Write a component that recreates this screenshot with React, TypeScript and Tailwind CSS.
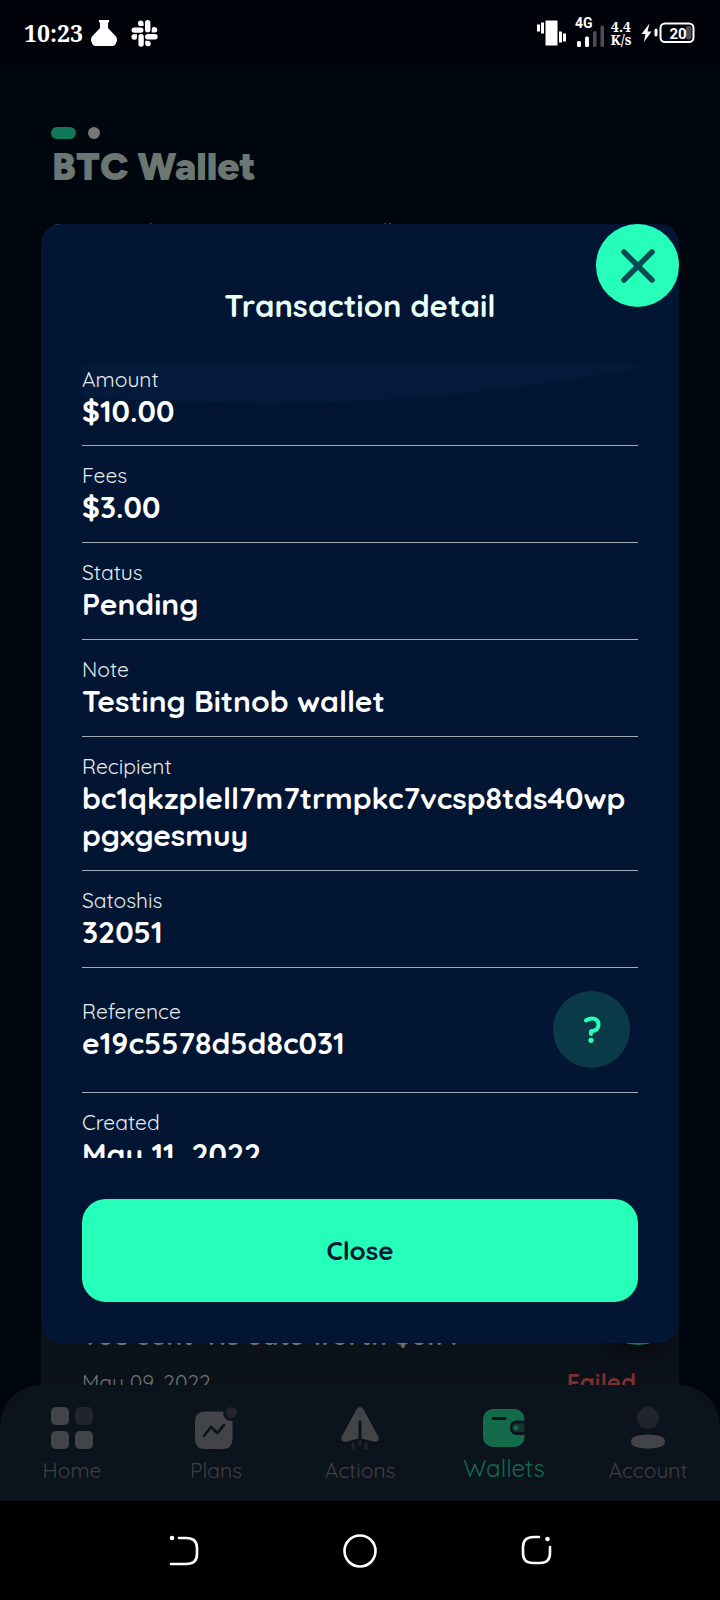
import type { ReactNode } from "react";

type Detail = { label: string; value: string; help?: boolean };

const details: Detail[] = [
  { label: "Amount", value: "$10.00" },
  { label: "Fees", value: "$3.00" },
  { label: "Status", value: "Pending" },
  { label: "Note", value: "Testing Bitnob wallet" },
  { label: "Recipient", value: "bc1qkzplell7m7trmpkc7vcsp8tds40wppgxgesmuy" },
  { label: "Satoshis", value: "32051" },
  { label: "Reference", value: "e19c5578d5d8c031", help: true },
  { label: "Created", value: "May 11, 2022" },
];

function StatusBar() {
  return (
    <header className="flex h-[66px] items-center justify-between bg-[#00020a] pl-6 pr-[25px] text-white">
      <div className="flex items-center">
        <span className="w-[67px] font-['Noto_Serif','Liberation_Serif',serif] text-[23px] font-bold leading-8">10:23</span>
        <svg className="h-[26px] w-[26px]" viewBox="0 0 26 26" fill="currentColor" aria-hidden="true">
          <path d="M8 0h10v2.500h-1V8l8 8.500c1.300 2 1.300 4.500 0 6.500q-1 3-3.500 3h-17Q2 26 1 23c-1.300-2-1.300-4.500 0-6.500L9 8V2.500H8Z" />
        </svg>
        <svg className="ml-[14px] h-[27px] w-[27px]" viewBox="0 0 27 27" fill="currentColor" aria-hidden="true">
          <rect x="14" y="0" width="5.400" height="12.400" rx="2.700" />
          <rect x="0.500" y="7.400" width="12" height="5.400" rx="2.700" />
          <rect x="7.400" y="14" width="5.400" height="12.700" rx="2.700" />
          <rect x="14" y="14" width="12.700" height="5.400" rx="2.700" />
          <path d="M12.600 6H10a2.800 2.800 0 1 1 2.600-3ZM20.700 12.600V10a2.800 2.800 0 1 1 3 2.600ZM14.200 20.700h2.500a2.800 2.800 0 1 1-2.500 3ZM6 14.200v2.500a2.800 2.800 0 1 1-3-2.500Z" />
        </svg>
      </div>
      <div className="flex items-center">
        <svg className="h-[26px] w-[29px]" viewBox="0 0 29 26" fill="currentColor" aria-hidden="true">
          <path d="M0 4.500h3v7H0zM4 2.500h3v11H4zM8.500 0.500h12v25h-12zM22 11.500h3v11h-3zM26 13.500h3v8h-3z" />
        </svg>
        <div className="ml-[9px] flex flex-col">
          <span className="h-[10px] font-['Roboto',sans-serif] text-[14px] font-bold leading-[6px]">4G</span>
          <svg className="-mt-[5px] h-[22px] w-[30px]" viewBox="0 0 30 22" fill="currentColor" aria-hidden="true">
            <rect x="2" y="16" width="4" height="6" rx="1.500" />
            <rect x="10" y="11.500" width="4" height="10.500" rx="1.500" />
            <rect x="18" y="6" width="3.500" height="16" rx="1.500" opacity=".3" />
            <rect x="25.500" y="0.500" width="3.500" height="21.500" rx="1.500" opacity=".3" />
          </svg>
        </div>
        <span className="ml-1 w-[24px] text-center font-['Noto_Serif','Liberation_Serif',serif] text-[14px] font-bold leading-[13px]">4.4 K/s</span>
        <svg className="ml-2 h-[22px] w-[54px]" viewBox="0 0 54 22" fill="currentColor" aria-hidden="true">
          <path d="M8.500 1.500 0.500 12h4L3 20l7.500-10.500h-4Z" />
          <rect x="13.500" y="6.500" width="3" height="8" rx="1.500" />
          <rect x="19.500" y="1.500" width="33" height="18.500" rx="4.500" fill="none" stroke="currentColor" strokeWidth="2" />
          <rect x="45" y="4" width="5.500" height="13.500" rx="2" opacity=".3" />
          <text x="28.500" y="16.500" className="font-['Roboto',sans-serif] text-[15px] font-bold">20</text>
        </svg>
      </div>
    </header>
  );
}

function HomeIcon() {
  return (
    <svg className="h-[42px] w-[42px]" viewBox="0 0 42 42" fill="#424449" aria-hidden="true">
      <rect width="18" height="18" rx="5" />
      <rect x="24" width="18" height="18" rx="5" fill="#21252b" />
      <rect y="24" width="18" height="18" rx="5" />
      <rect x="24" y="24" width="18" height="18" rx="5" />
    </svg>
  );
}

function PlansIcon() {
  return (
    <svg className="h-[42px] w-[42px]" viewBox="0 0 42 42" aria-hidden="true">
      <path d="M10 4.500h18.500a8 8 0 0 0 9 9.500v18q0 10-10 10H10Q0 42 0 32V14.500Q0 4.500 10 4.500Z" fill="#424449" />
      <circle cx="36.500" cy="5.500" r="5.500" fill="#21252b" />
      <path d="m9 29 7-9 6.500 6 6.500-8" fill="none" stroke="#0b131d" strokeWidth="2.600" strokeLinecap="round" strokeLinejoin="round" />
    </svg>
  );
}

function ActionsIcon() {
  return (
    <svg className="h-[42px] w-[42px]" viewBox="0 0 42 42" aria-hidden="true">
      <path d="M18 1.500Q21-1.500 24 1.500L39.500 30q1 5-4 4.800L22.500 31.500V14.500q-1.500-3-3 0v17L6.500 34.800q-5 .2-4-4.800Z" fill="#424449" />
      <path d="M14 37.500v3.500M21 34v3M27 37.500v4" stroke="#21252b" strokeWidth="3" strokeLinecap="round" />
    </svg>
  );
}

function WalletIcon() {
  return (
    <svg className="h-[42px] w-[42px]" viewBox="0 0 42 42" aria-hidden="true">
      <rect y="2" width="41.500" height="38" rx="10" fill="#136b4c" />
      <path d="M42 13.500h-9.500a7.500 7.500 0 0 0 0 14.500H42Z" fill="#0b131d" />
      <path d="M41.500 16.500H33a4 4 0 0 0 0 8.500h8.500Z" fill="#10372f" />
      <circle cx="33" cy="20.700" r="2.300" fill="#136b4c" />
      <path d="M10 11.500h12" stroke="#0b131d" strokeWidth="3" strokeLinecap="round" />
    </svg>
  );
}

function AccountIcon() {
  return (
    <svg className="h-[42px] w-[42px]" viewBox="0 0 42 42" aria-hidden="true">
      <circle cx="21" cy="11" r="11" fill="#21252b" />
      <path d="M4 34.500q0-7 17-7t17 7-17 7-17-7Z" fill="#424449" />
    </svg>
  );
}

function Tab({ label, icon, active = false }: { label: string; icon: ReactNode; active?: boolean }) {
  return (
    <a
      href={"#" + label.toLowerCase()}
      aria-current={active ? "page" : undefined}
      className={
        active
          ? "flex flex-1 flex-col items-center gap-1 text-[24px] leading-[30px] text-[#136b4c]"
          : "flex flex-1 flex-col items-center gap-[7px] text-[21px] leading-[28px] text-[#3f4042]"
      }
    >
      {icon}
      <span>{label}</span>
    </a>
  );
}

function TransactionDialog() {
  return (
    <section
      role="dialog"
      aria-labelledby="dialog-title"
      className="absolute inset-x-[41px] top-[224px] rounded-[20px] bg-[#021533] px-[41px] pb-[41px] pt-[63px]"
    >
      <button type="button" aria-label="Dismiss" className="absolute right-0 top-0 flex h-[83px] w-[83px] items-center justify-center rounded-full bg-[#26ffb9]">
        <svg className="h-[34px] w-[34px]" viewBox="0 0 34 34" fill="none" stroke="#0b4a55" strokeWidth="5.500" strokeLinecap="round" aria-hidden="true">
          <path d="m3 3 28 28M31 3 3 31" />
        </svg>
      </button>
      <h2 id="dialog-title" className="text-center text-[31px] font-bold leading-[37px] text-[#e9fff8]">Transaction detail</h2>
      <div className="relative mt-[41px] max-h-[793px] overflow-y-auto [scrollbar-width:none]">
        <svg className="absolute left-0 top-0 h-[38px] w-full" viewBox="0 0 556 38" preserveAspectRatio="none" fill="#031a3a" aria-hidden="true">
          <path d="M0 0h556v3Q340 44 130 37 50 36 0 32Z" />
        </svg>
        <dl className="relative">
          {details.map((item) => (
            <div key={item.label} className="flex items-center justify-between border-b border-[#a3aab5] pb-4 pt-[15px] first:pb-[15px] first:pt-0">
              <div className="min-w-0">
                <dt className="text-[21px] leading-7 text-[#e6eced]">{item.label}</dt>
                <dd className="break-all text-[30px] font-bold leading-[37px] text-white">{item.value}</dd>
              </div>
              {item.help && (
                <button type="button" aria-label="About this reference" className="my-2 mr-2 flex h-[77px] w-[77px] shrink-0 items-center justify-center rounded-full bg-[#0a3948] text-[#26ffb9]">
                  <svg className="h-[27px] w-[18px]" viewBox="0 0 18 27" fill="none" stroke="currentColor" strokeWidth="4" strokeLinecap="round" strokeLinejoin="round" aria-hidden="true">
                    <path d="M3 4.500C9 .5 15.500 3 15.500 8.500c0 4.500-3 6.500-7.500 6.800V18" />
                    <circle cx="8" cy="24.300" r="2.600" fill="currentColor" stroke="none" />
                  </svg>
                </button>
              )}
            </div>
          ))}
        </dl>
      </div>
      <button type="button" className="mt-[41px] h-[103px] w-full rounded-[24px] bg-[#26ffb9] text-[26px] font-bold text-[#021533]">Close</button>
    </section>
  );
}

export default function App() {
  return (
    <div className="relative flex min-h-screen flex-col bg-[#00060e] font-['Quicksand','Lato',sans-serif]">
      <StatusBar />
      <main className="flex flex-1 flex-col">
        <div className="flex items-center gap-3 px-[51px] pt-[61px]">
          <span className="h-[12px] w-[25px] rounded-full bg-[#137857]" />
          <span className="h-[12px] w-[12px] rounded-full bg-[#797676]" />
        </div>
        <h1 className="mt-1 px-[52px] font-['Figtree','Inter',sans-serif] text-[39px] font-black leading-[48px] text-[#6c7672]">BTC Wallet</h1>
        <p className="mt-[27px] px-[52px] text-[22px] leading-7 text-[#6c7672]">Swap and manage your USD wallet</p>
        <div className="mx-[41px] mt-10 flex h-0 flex-1 flex-col justify-end overflow-hidden bg-[#0c121a] px-[41px] text-[#6c7672]">
          <div className="flex items-end justify-between">
            <p className="-mb-2 text-[27px] font-bold leading-9">You sent 413 sats worth $0.14</p>
            <span className="-mr-[41px] h-[82px] w-[82px] rounded-full bg-[#137857] shadow-[0_8px_24px_#00000080]" />
          </div>
          <div className="-mb-[15px] mt-[19px] flex justify-between pr-[2px] leading-9">
            <span className="text-[21px]">May 09, 2022</span>
            <span className="text-[24px] font-bold text-[#7b2f2e]">Failed</span>
          </div>
        </div>
      </main>
      <nav aria-label="Main" className="relative flex h-[116px] rounded-t-[41px] bg-[#0b131d] pt-[22px]">
        <Tab label="Home" icon={<HomeIcon />} />
        <Tab label="Plans" icon={<PlansIcon />} />
        <Tab label="Actions" icon={<ActionsIcon />} />
        <Tab label="Wallets" icon={<WalletIcon />} active />
        <Tab label="Account" icon={<AccountIcon />} />
      </nav>
      <div className="flex h-[99px] items-center justify-center gap-[143px] bg-black text-white">
        <button type="button" aria-label="Back">
          <svg className="h-[34px] w-[34px]" viewBox="0 0 34 34" fill="none" stroke="currentColor" strokeWidth="2.600" strokeLinecap="round" aria-hidden="true">
            <path d="M13 4h7q11 0 11 10v6q0 10-11 10H5" />
            <circle cx="6" cy="4" r="1" fill="currentColor" />
          </svg>
        </button>
        <button type="button" aria-label="Home screen">
          <svg className="h-[34px] w-[34px]" viewBox="0 0 34 34" fill="none" stroke="currentColor" strokeWidth="2.600" aria-hidden="true">
            <circle cx="17" cy="17" r="15.500" />
          </svg>
        </button>
        <button type="button" aria-label="Recent apps">
          <svg className="h-[34px] w-[34px]" viewBox="0 0 34 34" fill="none" stroke="currentColor" strokeWidth="2.600" strokeLinecap="round" aria-hidden="true">
            <path d="M19 3h-5q-11 0-11 10v6q0 10 10 10h7q10 0 10-10v-6" />
            <circle cx="27.500" cy="5" r="1" fill="currentColor" />
          </svg>
        </button>
      </div>
      <TransactionDialog />
    </div>
  );
}
